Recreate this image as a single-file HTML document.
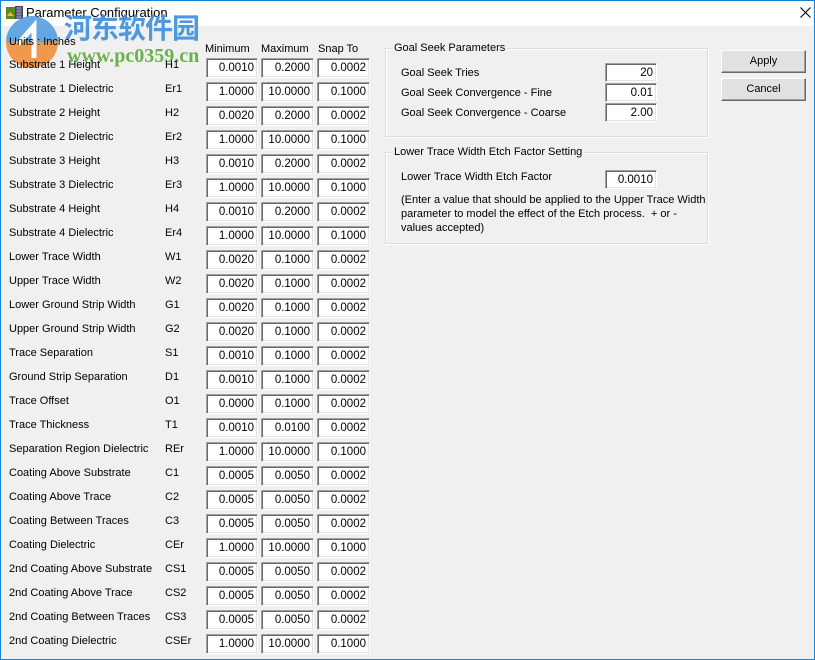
<!DOCTYPE html>
<html><head><meta charset="utf-8"><style>
*{margin:0;padding:0;box-sizing:border-box}
body{width:815px;height:660px;background:#f0f0f0;font-family:"Liberation Sans",Arial,sans-serif;font-size:11px;color:#000;position:relative;overflow:hidden}
.win{position:absolute;left:0;top:0;width:815px;height:660px;border:1px solid #1883d7}
.title{position:absolute;left:1px;top:1px;width:812px;height:25px;background:#fff}
.a{position:absolute;white-space:nowrap}
.l{position:absolute;left:9px;line-height:16px}
.c{position:absolute;left:165px;line-height:16px}
.i{position:absolute;height:20px;background:#fff;border:1px solid;border-color:#a0a0a0 #fff #fff #a0a0a0;box-shadow:inset 1px 1px 0 #696969,inset -1px -1px 0 #e3e3e3;text-align:right;padding-right:3px;line-height:19px;font-size:11.5px}
.i1{left:206px;width:52px}.i2{left:261px;width:53px}.i3{left:317px;width:53px}
.g{position:absolute;border:1px solid #dcdcdc;box-shadow:inset 1px 1px 0 #fff, 1px 1px 0 #fff}
.g span{position:absolute;top:-8px;left:6px;background:#f0f0f0;padding:0 2px;line-height:14px}
.btn{position:absolute;left:721px;width:85px;height:23px;background:#e1e1e1;border:1px solid;border-color:#fff #696969 #696969 #fff;box-shadow:inset -1px -1px 0 #a0a0a0;text-align:center;line-height:21px}
</style></head><body>
<div class="win"></div>
<div class="title"></div>
<svg class="a" style="left:6px;top:5px" width="18" height="16"><rect x="0" y="2" width="9" height="12" fill="#5a8a20"/><path d="M1 11 L4 7 L8 11Z" fill="#f0c020"/><rect x="9" y="1" width="8" height="13" fill="#404060"/><path d="M10 3h6M10 6h6M10 9h6M10 12h6M12 2v12M14 2v12" stroke="#9090c0" stroke-width="1"/></svg>
<div class="a" style="left:26px;top:5px;font-size:13px;line-height:16px">Parameter Configuration</div>
<svg class="a" style="left:800px;top:7px" width="11" height="11"><path d="M0.5 0.5L10.5 10.5M10.5 0.5L0.5 10.5" stroke="#000" stroke-width="1.1"/></svg>
<svg class="a" style="left:4px;top:14px;opacity:.85" width="56" height="56"><path d="M28 2A26 26 0 0 1 54 28L2 28A26 26 0 0 1 28 2Z" fill="#4a9ae0"/><path d="M2 28L54 28A26 26 0 0 1 28 54A26 26 0 0 1 2 28Z" fill="#ee8a30"/><path d="M14 30L30 12L30 44" stroke="#fff" stroke-width="5" fill="none"/></svg>
<div class="a" style="left:64px;top:10px;font-size:28px;font-weight:bold;color:#3e8fdc;opacity:.9;font-family:'Noto Sans CJK SC',sans-serif;line-height:34px;letter-spacing:-1px">河东软件园</div>
<div class="a" style="left:67px;top:46px;font-size:20px;font-weight:bold;color:#5cab3c;opacity:.9;font-family:'Liberation Serif',serif;line-height:20px">www.pc0359.cn</div>
<div class="a" style="left:9px;top:34px;line-height:16px">Units : Inches</div>
<div class="a" style="left:205px;top:41px;line-height:16px">Minimum</div>
<div class="a" style="left:261px;top:41px;line-height:16px">Maximum</div>
<div class="a" style="left:318px;top:41px;line-height:16px">Snap To</div>

<div class="l" style="top:57px">Substrate 1 Height</div><div class="c" style="top:57px">H1</div><div class="i i1" style="top:58px">0.0010</div><div class="i i2" style="top:58px">0.2000</div><div class="i i3" style="top:58px">0.0002</div>
<div class="l" style="top:81px">Substrate 1 Dielectric</div><div class="c" style="top:81px">Er1</div><div class="i i1" style="top:82px">1.0000</div><div class="i i2" style="top:82px">10.0000</div><div class="i i3" style="top:82px">0.1000</div>
<div class="l" style="top:105px">Substrate 2 Height</div><div class="c" style="top:105px">H2</div><div class="i i1" style="top:106px">0.0020</div><div class="i i2" style="top:106px">0.2000</div><div class="i i3" style="top:106px">0.0002</div>
<div class="l" style="top:129px">Substrate 2 Dielectric</div><div class="c" style="top:129px">Er2</div><div class="i i1" style="top:130px">1.0000</div><div class="i i2" style="top:130px">10.0000</div><div class="i i3" style="top:130px">0.1000</div>
<div class="l" style="top:153px">Substrate 3 Height</div><div class="c" style="top:153px">H3</div><div class="i i1" style="top:154px">0.0010</div><div class="i i2" style="top:154px">0.2000</div><div class="i i3" style="top:154px">0.0002</div>
<div class="l" style="top:177px">Substrate 3 Dielectric</div><div class="c" style="top:177px">Er3</div><div class="i i1" style="top:178px">1.0000</div><div class="i i2" style="top:178px">10.0000</div><div class="i i3" style="top:178px">0.1000</div>
<div class="l" style="top:201px">Substrate 4 Height</div><div class="c" style="top:201px">H4</div><div class="i i1" style="top:202px">0.0010</div><div class="i i2" style="top:202px">0.2000</div><div class="i i3" style="top:202px">0.0002</div>
<div class="l" style="top:225px">Substrate 4 Dielectric</div><div class="c" style="top:225px">Er4</div><div class="i i1" style="top:226px">1.0000</div><div class="i i2" style="top:226px">10.0000</div><div class="i i3" style="top:226px">0.1000</div>
<div class="l" style="top:249px">Lower Trace Width</div><div class="c" style="top:249px">W1</div><div class="i i1" style="top:250px">0.0020</div><div class="i i2" style="top:250px">0.1000</div><div class="i i3" style="top:250px">0.0002</div>
<div class="l" style="top:273px">Upper Trace Width</div><div class="c" style="top:273px">W2</div><div class="i i1" style="top:274px">0.0020</div><div class="i i2" style="top:274px">0.1000</div><div class="i i3" style="top:274px">0.0002</div>
<div class="l" style="top:297px">Lower Ground Strip Width</div><div class="c" style="top:297px">G1</div><div class="i i1" style="top:298px">0.0020</div><div class="i i2" style="top:298px">0.1000</div><div class="i i3" style="top:298px">0.0002</div>
<div class="l" style="top:321px">Upper Ground Strip Width</div><div class="c" style="top:321px">G2</div><div class="i i1" style="top:322px">0.0020</div><div class="i i2" style="top:322px">0.1000</div><div class="i i3" style="top:322px">0.0002</div>
<div class="l" style="top:345px">Trace Separation</div><div class="c" style="top:345px">S1</div><div class="i i1" style="top:346px">0.0010</div><div class="i i2" style="top:346px">0.1000</div><div class="i i3" style="top:346px">0.0002</div>
<div class="l" style="top:369px">Ground Strip Separation</div><div class="c" style="top:369px">D1</div><div class="i i1" style="top:370px">0.0010</div><div class="i i2" style="top:370px">0.1000</div><div class="i i3" style="top:370px">0.0002</div>
<div class="l" style="top:393px">Trace Offset</div><div class="c" style="top:393px">O1</div><div class="i i1" style="top:394px">0.0000</div><div class="i i2" style="top:394px">0.1000</div><div class="i i3" style="top:394px">0.0002</div>
<div class="l" style="top:417px">Trace Thickness</div><div class="c" style="top:417px">T1</div><div class="i i1" style="top:418px">0.0010</div><div class="i i2" style="top:418px">0.0100</div><div class="i i3" style="top:418px">0.0002</div>
<div class="l" style="top:441px">Separation Region Dielectric</div><div class="c" style="top:441px">REr</div><div class="i i1" style="top:442px">1.0000</div><div class="i i2" style="top:442px">10.0000</div><div class="i i3" style="top:442px">0.1000</div>
<div class="l" style="top:465px">Coating Above Substrate</div><div class="c" style="top:465px">C1</div><div class="i i1" style="top:466px">0.0005</div><div class="i i2" style="top:466px">0.0050</div><div class="i i3" style="top:466px">0.0002</div>
<div class="l" style="top:489px">Coating Above Trace</div><div class="c" style="top:489px">C2</div><div class="i i1" style="top:490px">0.0005</div><div class="i i2" style="top:490px">0.0050</div><div class="i i3" style="top:490px">0.0002</div>
<div class="l" style="top:513px">Coating Between Traces</div><div class="c" style="top:513px">C3</div><div class="i i1" style="top:514px">0.0005</div><div class="i i2" style="top:514px">0.0050</div><div class="i i3" style="top:514px">0.0002</div>
<div class="l" style="top:537px">Coating Dielectric</div><div class="c" style="top:537px">CEr</div><div class="i i1" style="top:538px">1.0000</div><div class="i i2" style="top:538px">10.0000</div><div class="i i3" style="top:538px">0.1000</div>
<div class="l" style="top:561px">2nd Coating Above Substrate</div><div class="c" style="top:561px">CS1</div><div class="i i1" style="top:562px">0.0005</div><div class="i i2" style="top:562px">0.0050</div><div class="i i3" style="top:562px">0.0002</div>
<div class="l" style="top:585px">2nd Coating Above Trace</div><div class="c" style="top:585px">CS2</div><div class="i i1" style="top:586px">0.0005</div><div class="i i2" style="top:586px">0.0050</div><div class="i i3" style="top:586px">0.0002</div>
<div class="l" style="top:609px">2nd Coating Between Traces</div><div class="c" style="top:609px">CS3</div><div class="i i1" style="top:610px">0.0005</div><div class="i i2" style="top:610px">0.0050</div><div class="i i3" style="top:610px">0.0002</div>
<div class="l" style="top:633px">2nd Coating Dielectric</div><div class="c" style="top:633px">CSEr</div><div class="i i1" style="top:634px">1.0000</div><div class="i i2" style="top:634px">10.0000</div><div class="i i3" style="top:634px">0.1000</div>

<div class="g" style="left:385px;top:48px;width:323px;height:89px"><span>Goal Seek Parameters</span></div>
<div class="a" style="left:401px;top:65px;line-height:16px">Goal Seek Tries</div>
<div class="a" style="left:401px;top:85px;line-height:16px">Goal Seek Convergence - Fine</div>
<div class="a" style="left:401px;top:105px;line-height:16px">Goal Seek Convergence - Coarse</div>
<div class="i" style="left:605px;top:63px;width:52px;height:19px;line-height:18px">20</div>
<div class="i" style="left:605px;top:83px;width:52px;height:19px;line-height:18px">0.01</div>
<div class="i" style="left:605px;top:103px;width:52px;height:19px;line-height:18px">2.00</div>

<div class="g" style="left:385px;top:152px;width:323px;height:92px"><span>Lower Trace Width Etch Factor Setting</span></div>
<div class="a" style="left:401px;top:169px;line-height:16px">Lower Trace Width Etch Factor</div>
<div class="i" style="left:605px;top:170px;width:52px;height:19px;line-height:18px">0.0010</div>
<div class="a" style="left:401px;top:193px;line-height:14px;white-space:normal;width:310px">(Enter a value that should be applied to the Upper Trace Width parameter to model the effect of the Etch process.&nbsp; + or - values accepted)</div>

<div class="btn" style="top:50px">Apply</div>
<div class="btn" style="top:78px">Cancel</div>
</body></html>
